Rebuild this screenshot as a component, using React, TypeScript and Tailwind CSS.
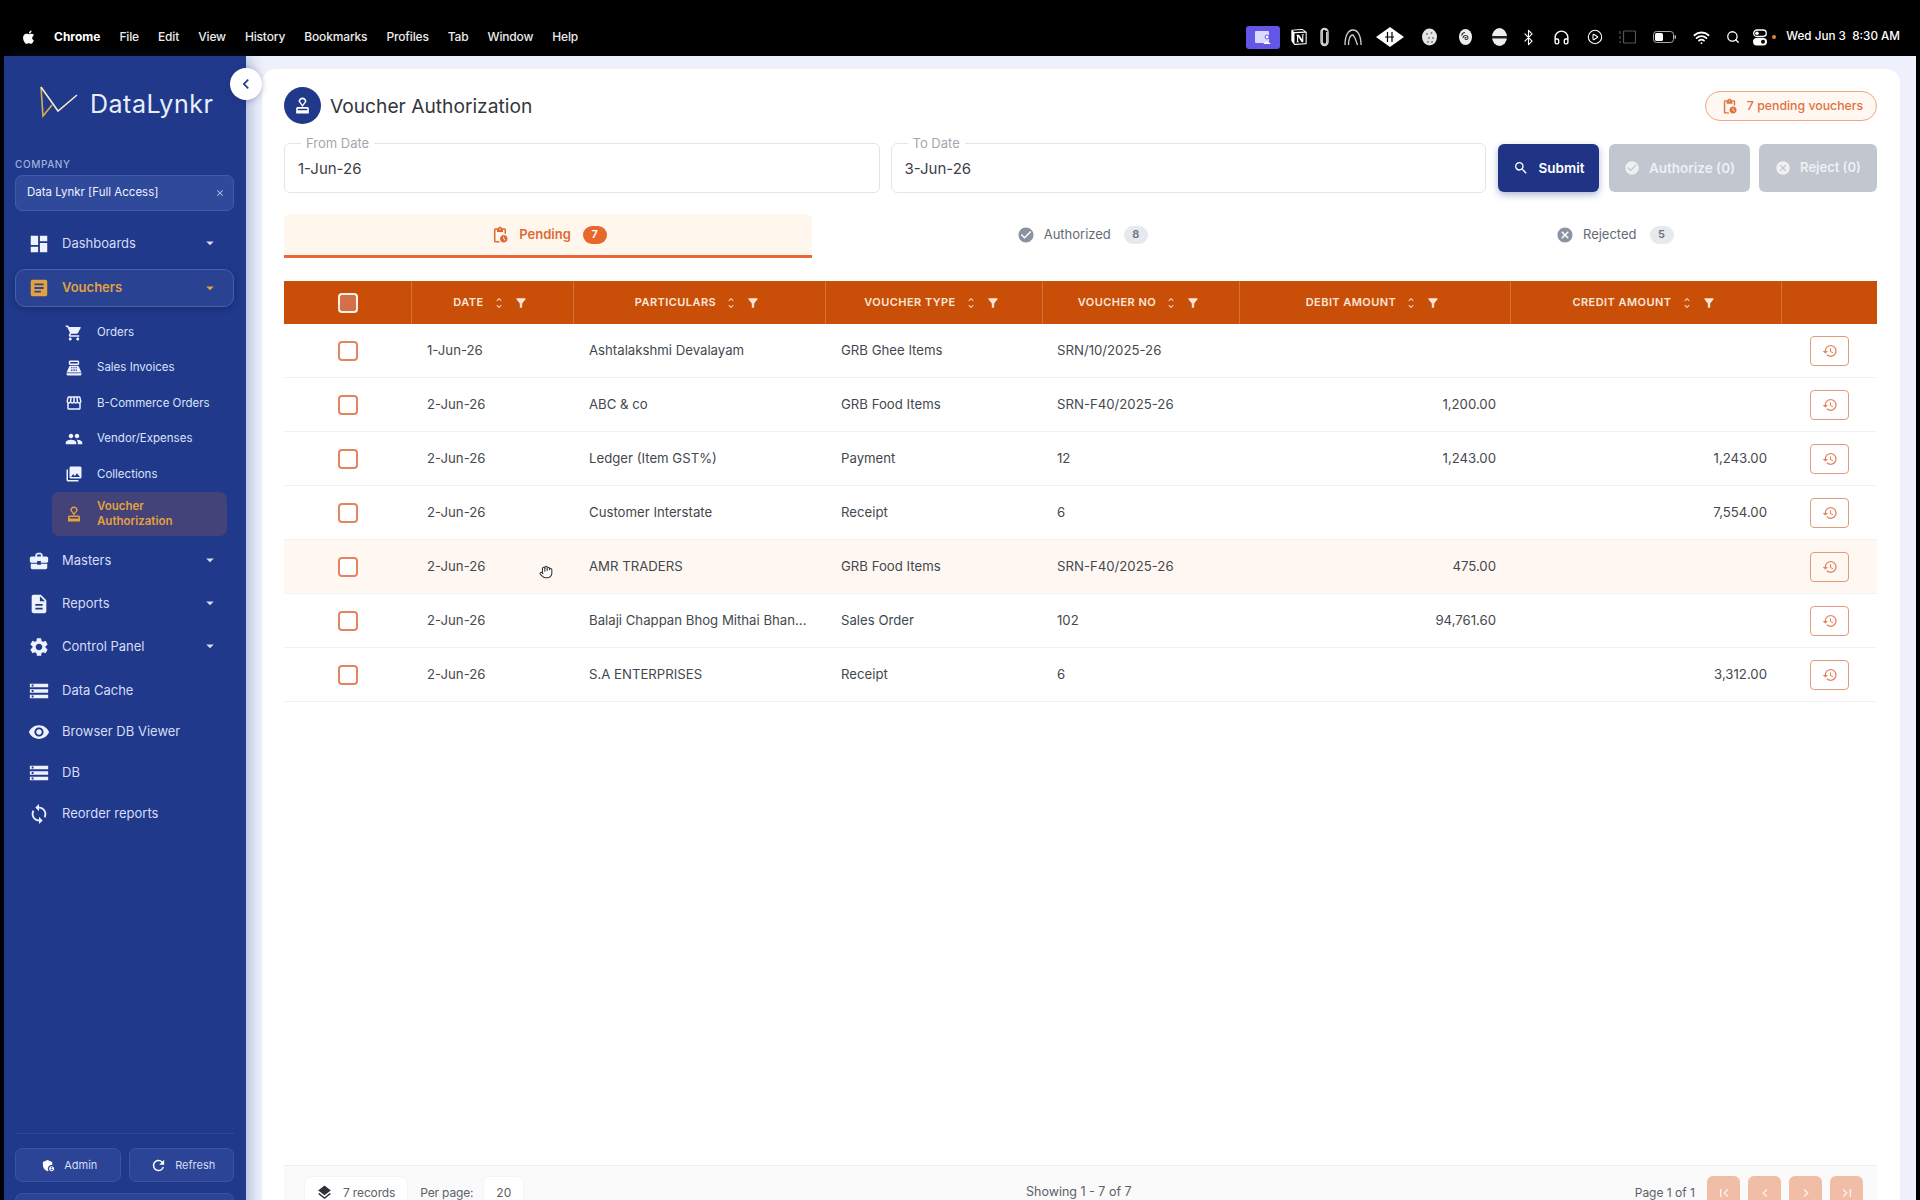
import type { ReactNode } from "react";
import { Bluetooth, CirclePlay, Hand, Headphones, Search, Wifi } from "lucide-react";
import { SiNotion } from "react-icons/si";
import {
  MdAdminPanelSettings,
  MdApproval,
  MdArrowDropDown,
  MdArticle,
  MdBusinessCenter,
  MdCancel,
  MdCheckCircle,
  MdChevronLeft,
  MdChevronRight,
  MdClose,
  MdDashboard,
  MdDescription,
  MdFilterAlt,
  MdFirstPage,
  MdHistory,
  MdLastPage,
  MdLayers,
  MdPendingActions,
  MdPeople,
  MdPhotoLibrary,
  MdPointOfSale,
  MdRefresh,
  MdSearch,
  MdSettings,
  MdShoppingCart,
  MdStorage,
  MdStorefront,
  MdSync,
  MdUnfoldMore,
  MdVisibility,
} from "react-icons/md";

const menuItems = ["File", "Edit", "View", "History", "Bookmarks", "Profiles", "Tab", "Window", "Help"];

const subItems = [
  { label: "Orders", icon: MdShoppingCart },
  { label: "Sales Invoices", icon: MdPointOfSale },
  { label: "B-Commerce Orders", icon: MdStorefront },
  { label: "Vendor/Expenses", icon: MdPeople },
  { label: "Collections", icon: MdPhotoLibrary },
];

const lowerNav = [
  { label: "Masters", icon: MdBusinessCenter, caret: true, gap: "mt-[5px]" },
  { label: "Reports", icon: MdDescription, caret: true, gap: "mt-[5px]" },
  { label: "Control Panel", icon: MdSettings, caret: true, gap: "mt-[5px]" },
  { label: "Data Cache", icon: MdStorage, caret: false, gap: "mt-[6px]" },
  { label: "Browser DB Viewer", icon: MdVisibility, caret: false, gap: "mt-[3px]" },
  { label: "DB", icon: MdStorage, caret: false, gap: "mt-[3px]" },
  { label: "Reorder reports", icon: MdSync, caret: false, gap: "mt-[3px]" },
];

const columns = [
  { label: "DATE" },
  { label: "PARTICULARS" },
  { label: "VOUCHER TYPE" },
  { label: "VOUCHER NO" },
  { label: "DEBIT AMOUNT" },
  { label: "CREDIT AMOUNT" },
];

const rows = [
  { date: "1-Jun-26", name: "Ashtalakshmi Devalayam", type: "GRB Ghee Items", no: "SRN/10/2025-26", debit: "", credit: "" },
  { date: "2-Jun-26", name: "ABC & co", type: "GRB Food Items", no: "SRN-F40/2025-26", debit: "1,200.00", credit: "" },
  { date: "2-Jun-26", name: "Ledger (Item GST%)", type: "Payment", no: "12", debit: "1,243.00", credit: "1,243.00" },
  { date: "2-Jun-26", name: "Customer Interstate", type: "Receipt", no: "6", debit: "", credit: "7,554.00" },
  { date: "2-Jun-26", name: "AMR TRADERS", type: "GRB Food Items", no: "SRN-F40/2025-26", debit: "475.00", credit: "" },
  { date: "2-Jun-26", name: "Balaji Chappan Bhog Mithai Bhan...", type: "Sales Order", no: "102", debit: "94,761.60", credit: "" },
  { date: "2-Jun-26", name: "S.A ENTERPRISES", type: "Receipt", no: "6", debit: "", credit: "3,312.00" },
];

const GRID = "grid grid-cols-[128px_162px_252px_217px_197px_271px_271px_95px]";

function AppleLogo() {
  return (
    <svg width="13" height="16" viewBox="0 0 24 28" fill="white">
      <path d="M17.6 14.8c0-3 2.5-4.5 2.6-4.6-1.4-2.1-3.6-2.4-4.4-2.4-1.9-.2-3.6 1.1-4.6 1.1-1 0-2.4-1.1-4-1C4.200 7.900 2.300 9.100 1.200 11c-2.200 3.800-.6 9.400 1.600 12.500 1 1.500 2.300 3.200 3.900 3.100 1.600-.1 2.200-1 4-1s2.400 1 4 1c1.700 0 2.700-1.500 3.700-3 1.200-1.700 1.700-3.400 1.700-3.500-.1 0-3.500-1.300-3.500-5.300zM14.500 5.700c.8-1 1.400-2.400 1.200-3.700-1.200 0-2.600.8-3.500 1.800-.8.900-1.400 2.300-1.200 3.600 1.300.1 2.700-.7 3.500-1.700z" />
    </svg>
  );
}

function MenuBar() {
  return (
    <div className="h-14 shrink-0 bg-black flex items-center pl-[23px] pr-[20px] text-white text-[12px] pt-[20px] pb-[2px]">
      <AppleLogo />
      <span className="ml-[18px] font-bold">Chrome</span>
      <div className="ml-[19px] flex items-center gap-[19px] font-medium tracking-[-0.15px] text-[#ececec]">
        {menuItems.map((m) => (
          <span key={m}>{m}</span>
        ))}
      </div>
      <div className="ml-auto flex items-center text-white">
        <div className="w-[34px] h-[23px] rounded-[3px] bg-[#6457e8] flex items-center justify-center">
          <svg width="18" height="15" viewBox="0 0 18 15" fill="none">
            <rect x="1" y="1" width="14" height="12" rx="1" fill="#dcd9ff" />
            <circle cx="13" cy="7" r="2" fill="white" stroke="#6457e8" />
            <path d="M9.500 14c0-2.500 7-2.500 7 0z" fill="white" />
          </svg>
        </div>
        <SiNotion size={16} className="ml-[11px]" />
        <svg width="9" height="20" viewBox="0 0 9 20" fill="none" stroke="#d8d8d8" strokeWidth="1.4" className="ml-[13px]">
          <path d="M6.800 5v10a2.300 2.300 0 0 1-4.600 0V4a2 2 0 0 1 4 0" />
          <rect x="1" y="1.500" width="7" height="17" rx="3.500" />
        </svg>
        <svg width="18" height="17" viewBox="0 0 18 17" fill="none" stroke="#cfcfcf" strokeWidth="1.3" className="ml-[15px]">
          <path d="M1 16C1 7 4 1 9 1s8 6 8 15M4.500 16C4.500 10 6 6 9 6l2 3 2.500 7" />
        </svg>
        <svg width="28" height="20" viewBox="0 0 28 20" className="ml-[14px]">
          <path d="M14 0l14 10-14 10L0 10z" fill="white" />
          <path d="M11.500 5v10M16 5v10M9 10h9" stroke="black" strokeWidth="1.200" />
        </svg>
        <svg width="15" height="18" viewBox="0 0 15 18" className="ml-[18px]">
          <ellipse cx="7.500" cy="9" rx="7.500" ry="8.500" fill="#e4e4e4" />
          <circle cx="5" cy="6" r="0.900" fill="#777" />
          <circle cx="9.500" cy="5" r="0.900" fill="#777" />
          <circle cx="7" cy="10" r="0.900" fill="#777" />
          <circle cx="11" cy="10" r="0.900" fill="#777" />
          <circle cx="6" cy="14" r="0.900" fill="#777" />
          <circle cx="10" cy="14" r="0.900" fill="#777" />
        </svg>
        <svg width="13" height="16" viewBox="0 0 13 16" className="ml-[22px]">
          <ellipse cx="6.500" cy="8" rx="6.500" ry="8" fill="#eeeeee" />
          <path d="M4 9a2.500 2.500 0 1 1 5 0c0 2-3 2-3 .3 0-1 1.300-1 1.300-.2M6 3.500c-2 0-3 1-3.500 3" fill="none" stroke="#333" strokeWidth="1.100" />
        </svg>
        <svg width="15" height="18" viewBox="0 0 15 18" className="ml-[20px]">
          <ellipse cx="7.500" cy="9" rx="7.500" ry="9" fill="#eeeeee" />
          <rect y="8" width="15" height="2.500" fill="#222" />
        </svg>
        <Bluetooth size={17} strokeWidth={1.6} className="ml-[13px] -mr-[4px]" />
        <Headphones size={17} strokeWidth={2} className="ml-[20px]" />
        <CirclePlay size={16} strokeWidth={1.6} className="ml-[17px]" />
        <svg width="17" height="14" viewBox="0 0 17 14" fill="none" stroke="#555" strokeWidth="1.200" className="ml-[16px]">
          <rect x="4.500" y="1" width="12" height="12" rx="1" />
          <path d="M1 1v3M1 6v3M1 11v2" />
        </svg>
        <svg width="23" height="12" viewBox="0 0 23 12" className="ml-[17px]">
          <rect x="0.500" y="0.500" width="20" height="11" rx="3" fill="none" stroke="#aaa" />
          <rect x="2" y="2" width="8" height="8" rx="1.500" fill="white" />
          <rect x="21.500" y="4" width="1.500" height="4" rx="0.700" fill="#aaa" />
        </svg>
        <Wifi size={17} strokeWidth={2.6} className="ml-[17px]" />
        <Search size={14} strokeWidth={2.2} className="ml-[16px]" />
        <svg width="14" height="17" viewBox="0 0 14 17" className="ml-[13px]">
          <rect x="0.700" y="1" width="12.600" height="6.500" rx="3.200" fill="none" stroke="white" strokeWidth="1.300" />
          <circle cx="4" cy="4.200" r="1.800" fill="white" />
          <rect y="9" width="14" height="7.500" rx="3.700" fill="white" />
          <circle cx="10" cy="12.700" r="2" fill="black" />
        </svg>
        <span className="ml-[5px] w-[4px] h-[4px] rounded-full bg-[#e08a2c]" />
        <span className="ml-[10px] font-medium text-[11.7px] whitespace-nowrap">Wed Jun 3&nbsp; 8:30 AM</span>
      </div>
    </div>
  );
}

function Logo() {
  return (
    <svg width="38" height="32" viewBox="0 0 38 32" fill="none" className="shrink-0">
      <path d="M1 1l2 29 9-11" stroke="#d7b04a" strokeWidth="1.600" />
      <path d="M1 1l17 24L37 9" stroke="#f4ead0" strokeWidth="1.600" />
    </svg>
  );
}

function NavRow({ label, icon: Icon, caret, gap }: { label: string; icon: typeof MdDashboard; caret: boolean; gap: string }) {
  return (
    <div className={`h-[38px] flex items-center pl-[13px] pr-[15px] pt-[2px] ${gap}`}>
      <Icon size={22} className="text-[#eef2ff] shrink-0" />
      <span className="ml-[12px] text-[13px] text-[#d5ddf8]">{label}</span>
      {caret && <MdArrowDropDown size={18} className="ml-auto text-[#d5ddf8] -mt-[2px]" />}
    </div>
  );
}

function SidebarButton({ children }: { children: ReactNode }) {
  return (
    <div className="flex-1 h-[34px] pl-[3px] rounded-[7px] border border-[#3b55a3] bg-[#2b4495] flex items-center justify-center gap-[8px] text-[11px] text-[#d5ddf8]">
      {children}
    </div>
  );
}

function Sidebar() {
  return (
    <aside className="relative z-10 w-[242px] shrink-0 bg-[#20398a] pl-[11px] pr-[12px] flex flex-col shadow-[5px_0_12px_rgba(32,57,138,0.28)]">
      <div className="pt-[30px] pl-[25px] h-[102px] flex items-start gap-[12px]">
        <Logo />
        <span className="text-[25px] leading-[36px] tracking-[0.5px] text-[#e9eefc] whitespace-nowrap">DataLynkr</span>
      </div>
      <div className="text-[10px] leading-[12px] font-medium tracking-[0.6px] text-[#9fb0dc]">COMPANY</div>
      <div className="mt-[5px] h-[36px] rounded-[7px] border border-[#405aa8] bg-[#304a9b] flex items-center pl-[11px] pr-[8px] text-[11.5px] text-[#eef2ff]">
        <span>Data Lynkr [Full Access]</span>
        <MdClose size={10} className="ml-auto text-[#b9c5ea]" />
      </div>

      <NavRow label="Dashboards" icon={MdDashboard} caret gap="mt-[13px]" />
      <div className="mt-[7px] h-[38px] rounded-[10px] border border-[#4560ac] bg-[#2a4292] flex items-center pl-[12px] pr-[14px] shadow-[0_2px_6px_rgba(10,20,70,0.3)]">
        <MdArticle size={22} className="text-[#e3a13f] shrink-0" />
        <span className="ml-[12px] text-[13px] font-semibold text-[#e3a13f]">Vouchers</span>
        <MdArrowDropDown size={18} className="ml-auto text-[#e3a13f]" />
      </div>

      <div className="mt-[8px] flex flex-col">
        {subItems.map(({ label, icon: Icon }) => (
          <div key={label} className="h-[35.4px] ml-[37px] pl-[13px] flex items-center">
            <Icon size={18} className="text-[#eef2ff] shrink-0" />
            <span className="ml-[14px] text-[11.5px] text-[#dbe3fb] whitespace-nowrap">{label}</span>
          </div>
        ))}
        <div className="h-[44px] ml-[37px] mr-[7px] pl-[13px] rounded-[7px] bg-[#434279] flex items-center">
          <MdApproval size={18} className="text-[#e3a13f] shrink-0" />
          <span className="ml-[14px] text-[11.5px] leading-[14.5px] font-semibold text-[#e3a13f]">
            Voucher
            <br />
            Authorization
          </span>
        </div>
      </div>

      {lowerNav.map((n) => (
        <NavRow key={n.label} {...n} />
      ))}

      <div className="mt-auto border-t border-[#32498f] h-[91px] pt-[14px]">
        <div className="flex gap-[8px]">
          <SidebarButton>
            <MdAdminPanelSettings size={15} className="text-white" />
            Admin
          </SidebarButton>
          <SidebarButton>
            <MdRefresh size={17} className="text-white" />
            Refresh
          </SidebarButton>
        </div>
        <div className="mt-[11px] h-[30px] rounded-[7px] border border-[#3b55a3] bg-[#2b4495]" />
      </div>

      <button className="absolute -right-[16px] top-[12px] w-[32px] h-[32px] rounded-full bg-white flex items-center justify-center shadow-[0_1px_6px_rgba(30,40,100,0.3)]">
        <MdChevronLeft size={20} className="text-[#20398a]" />
      </button>
    </aside>
  );
}

function DateField({ label, value }: { label: string; value: string }) {
  return (
    <div className="relative flex-1 h-[50px] rounded-[6px] border border-[#e3e5e8] flex items-center px-[13px] pt-[2px] text-[15px] text-[#3d4248]">
      <span className="absolute -top-[9px] left-[16px] bg-white px-[5px] text-[13px] leading-[16px] text-[#a3a8ae]">{label}</span>
      {value}
    </div>
  );
}

function Tab({ label, count, icon, active }: { label: string; count: number; icon: ReactNode; active?: boolean }) {
  return (
    <div
      className={`h-[44px] flex items-center justify-center text-[13px] border-b-[3px] ${
        active
          ? "w-[528px] pl-[2px] gap-[10px] bg-[#fff7ed] rounded-t-[6px] border-[#e8683a] text-[#dd6a35] font-semibold"
          : "flex-1 pl-[8px] gap-[9px] border-transparent text-[#646b75]"
      }`}
    >
      {icon}
      <span>{label}</span>
      <span
        className={`min-w-[24px] h-[18px] px-[7px] rounded-full flex items-center justify-center text-[11px] font-semibold ${
          active ? "ml-[2px] bg-[#e8672a] text-white" : "ml-[4px] bg-[#e6e9ee] text-[#6b7280]"
        }`}
      >
        {count}
      </span>
    </div>
  );
}

function VoucherTable() {
  return (
    <div>
      <div className={`${GRID} h-[43px] bg-[#c94e07] text-[#fde6d8] text-[11px] font-semibold tracking-[0.45px]`}>
        <div className="flex items-center justify-center border-r border-[#d9703a]">
          <span className="w-[20px] h-[20px] rounded-[4px] border-2 border-[#fdf1ea] bg-[#d56f48]" />
        </div>
        {columns.map((c) => (
          <div key={c.label} className="flex items-center justify-center gap-[8px] pr-[4px] border-r border-[#d9703a]">
            <span>{c.label}</span>
            <MdUnfoldMore size={14} className="text-[#f6c7ab]" />
            <MdFilterAlt size={14} className="text-[#fde6d8]" />
          </div>
        ))}
        <div />
      </div>
      {rows.map((r, i) => (
        <div
          key={i}
          className={`${GRID} h-[54px] items-center border-b border-[#f1f2f4] text-[13.2px] text-[#44484e] ${
            i === 4 ? "bg-[#fff8f2]" : ""
          }`}
        >
          <div className="flex justify-center">
            <span className="w-[20px] h-[20px] rounded-[4px] border-2 border-[#e58461] bg-white" />
          </div>
          <div className="pl-[15px]">{r.date}</div>
          <div className="pl-[15px] whitespace-nowrap">{r.name}</div>
          <div className="pl-[15px]">{r.type}</div>
          <div className="pl-[14px]">{r.no}</div>
          <div className="pr-[15px] text-right">{r.debit}</div>
          <div className="pr-[15px] text-right">{r.credit}</div>
          <div className="flex justify-center">
            <span className="w-[39px] h-[30px] rounded-[4px] border border-[#e09a7c] flex items-center justify-center">
              <MdHistory size={16} className="text-[#e0845f]" />
            </span>
          </div>
        </div>
      ))}
    </div>
  );
}

function PagerButton({ children }: { children: ReactNode }) {
  return (
    <span className="w-[33px] h-[34px] rounded-[6px] bg-[#f2bda6] flex items-center justify-center text-[#fdf0e9]">{children}</span>
  );
}

function Footer() {
  return (
    <div className="h-[54px] shrink-0 border-t border-[#eceef0] bg-[#fafafa] flex items-center text-[12px] text-[#5c6168] relative">
      <div className="ml-[20px] h-[34px] pl-[11px] pr-[12px] rounded-[8px] bg-white border border-[#f3f4f5] tracking-[-0.15px] flex items-center gap-[10px]">
        <MdLayers size={17} className="text-[#2f3338]" />
        <span>7 records</span>
      </div>
      <span className="ml-[12px] tracking-[-0.15px]">Per page:</span>
      <span className="ml-[10px] h-[34px] px-[12px] rounded-[6px] bg-white border border-[#f3f4f5] flex items-center">20</span>
      <span className="absolute left-[742px] text-[12.5px]">Showing 1 - 7 of 7</span>
      <div className="ml-auto flex items-center">
        <span className="mr-[12px]">Page 1 of 1</span>
        <div className="flex gap-[8px] pr-[14px]">
          <PagerButton>
            <MdFirstPage size={16} />
          </PagerButton>
          <PagerButton>
            <MdChevronLeft size={16} />
          </PagerButton>
          <PagerButton>
            <MdChevronRight size={16} />
          </PagerButton>
          <PagerButton>
            <MdLastPage size={16} />
          </PagerButton>
        </div>
      </div>
    </div>
  );
}

export default function App() {
  return (
    <div className="h-[1200px] w-full overflow-hidden bg-black flex flex-col [font-family:Inter,'Liberation_Sans',sans-serif]">
      <MenuBar />
      <div className="h-[1168px] flex px-[4px]">
        <Sidebar />
        <main className="flex-1 bg-[#eef0fb] pl-[16px] pr-[16px] pt-[13px] h-[1168px] overflow-hidden">
          <div className="relative h-[1150px] rounded-t-[14px] bg-white pl-[22px] pr-[23px] flex flex-col">
            <div className="pt-[18px] flex items-start">
              <span className="w-[37px] h-[37px] rounded-full bg-[#20398a] flex items-center justify-center">
                <MdApproval size={19} className="text-white" />
              </span>
              <h1 className="ml-[9px] text-[19.2px] leading-[38px] h-[37px] text-[#33373d]">Voucher Authorization</h1>
              <div className="ml-auto mt-[4px] h-[30px] w-[172px] pl-[2px] rounded-full border border-[#f0a483] bg-[#fff7f1] flex items-center justify-center gap-[9px] text-[12.3px] font-medium text-[#e2713f]">
                <MdPendingActions size={17} />
                7 pending vouchers
              </div>
            </div>

            <div className="mt-[19px] flex items-center">
              <div className="flex-1 flex gap-[11px]">
                <DateField label="From Date" value="1-Jun-26" />
                <DateField label="To Date" value="3-Jun-26" />
              </div>
              <button className="ml-[12px] w-[101px] h-[48px] rounded-[6px] bg-[#1f3485] text-white text-[13.5px] font-semibold flex items-center justify-center gap-[10px] shadow-[0_3px_7px_rgba(31,52,133,0.35)]">
                <MdSearch size={16} />
                Submit
              </button>
              <button className="ml-[10px] w-[141px] h-[48px] rounded-[6px] bg-[#c1c6cf] text-[#eef0f3] text-[13.5px] font-semibold flex items-center justify-center gap-[9px]">
                <MdCheckCircle size={16} />
                Authorize (0)
              </button>
              <button className="ml-[9px] w-[118px] h-[48px] rounded-[6px] bg-[#c1c6cf] text-[#eef0f3] text-[13px] font-semibold flex items-center justify-center gap-[9px]">
                <MdCancel size={16} />
                Reject (0)
              </button>
            </div>

            <div className="mt-[21px] flex">
              <Tab label="Pending" count={7} active icon={<MdPendingActions size={18} />} />
              <Tab label="Authorized" count={8} icon={<MdCheckCircle size={18} className="text-[#8a93a3]" />} />
              <Tab label="Rejected" count={5} icon={<MdCancel size={18} className="text-[#8a93a3]" />} />
            </div>

            <div className="mt-[23px]">
              <VoucherTable />
            </div>

            <div className="mt-auto">
              <Footer />
            </div>

            <Hand size={14} strokeWidth={1.8} fill="white" className="absolute left-[277px] top-[496px] text-[#333]" />
          </div>
        </main>
      </div>
    </div>
  );
}
